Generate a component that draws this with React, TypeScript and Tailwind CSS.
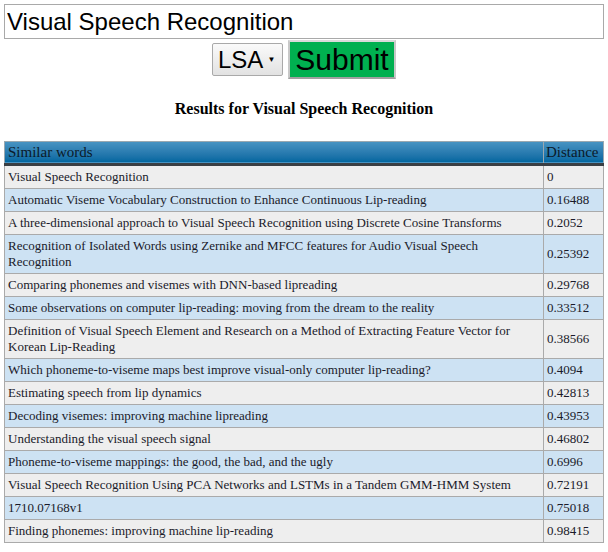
const ROWS: { title: string; distance: string }[] = [
  { title: "Visual Speech Recognition", distance: "0" },
  { title: "Automatic Viseme Vocabulary Construction to Enhance Continuous Lip-reading", distance: "0.16488" },
  { title: "A three-dimensional approach to Visual Speech Recognition using Discrete Cosine Transforms", distance: "0.2052" },
  { title: "Recognition of Isolated Words using Zernike and MFCC features for Audio Visual Speech Recognition", distance: "0.25392" },
  { title: "Comparing phonemes and visemes with DNN-based lipreading", distance: "0.29768" },
  { title: "Some observations on computer lip-reading: moving from the dream to the reality", distance: "0.33512" },
  { title: "Definition of Visual Speech Element and Research on a Method of Extracting Feature Vector for Korean Lip-Reading", distance: "0.38566" },
  { title: "Which phoneme-to-viseme maps best improve visual-only computer lip-reading?", distance: "0.4094" },
  { title: "Estimating speech from lip dynamics", distance: "0.42813" },
  { title: "Decoding visemes: improving machine lipreading", distance: "0.43953" },
  { title: "Understanding the visual speech signal", distance: "0.46802" },
  { title: "Phoneme-to-viseme mappings: the good, the bad, and the ugly", distance: "0.6996" },
  { title: "Visual Speech Recognition Using PCA Networks and LSTMs in a Tandem GMM-HMM System", distance: "0.72191" },
  { title: "1710.07168v1", distance: "0.75018" },
  { title: "Finding phonemes: improving machine lip-reading", distance: "0.98415" },
];

const App = () => {
  return (
    <div className="w-[608px] h-[552px] bg-white overflow-hidden font-['Liberation_Serif',serif]">
      <div className="px-1 pt-1">
        <input
          defaultValue="Visual Speech Recognition"
          className="block w-full h-[35px] border border-[#a9a9a9] px-[2px] text-[24px] leading-[28px] text-black font-['Liberation_Sans',Arial,sans-serif] outline-none"
        />
      </div>

      <div className="flex items-center justify-center gap-[5px] mt-[1px]">
        <div className="flex items-center w-[71px] h-[33px] pl-[5px] border border-[#a9a9a9] rounded-[2px] bg-gradient-to-b from-[#fafafa] to-[#e2e2e2] text-[24px] text-black font-['Liberation_Sans',Arial,sans-serif]">
          <span>LSA</span>
          <span className="ml-[4px] text-[8px] leading-none">▼</span>
        </div>
        <button className="w-[108px] h-[39px] bg-[#00b050] border-2 border-[#c8c8c8] border-t-[#dadada] border-b-[#a0a0a0] text-[30px] leading-none text-black font-['Liberation_Sans',Arial,sans-serif]">
          Submit
        </button>
      </div>

      <h3 className="text-center font-bold text-[16px] leading-[20px] mt-[20px] text-black">
        Results for Visual Speech Recognition
      </h3>

      <div className="px-1 mt-[22px]">
        <table className="w-full border-collapse text-[13px] leading-[16px] text-[#1a1a2a]">
          <thead>
            <tr className="bg-gradient-to-b from-[#4793c2] to-[#0067a0] border-b-[3px] border-b-[#3a3f44]">
              <th className="text-left font-normal text-[15px] leading-[17px] px-[3px] py-[2px] border border-[#9aa8b0] border-b-[#3a3f44] text-[#0b1a2a]">
                Similar words
              </th>
              <th className="text-left font-normal text-[15px] leading-[17px] px-[2px] py-[2px] border border-[#9aa8b0] border-b-[#3a3f44] text-[#0b1a2a] w-[60px]">
                Distance
              </th>
            </tr>
          </thead>
          <tbody>
            {ROWS.map((r, i) => (
              <tr key={r.title} className={i % 2 === 0 ? "bg-[#eeeeee]" : "bg-[#cde2f3]"}>
                <td className="px-[3px] py-[3px] border border-[#aaaaaa]">{r.title}</td>
                <td className="px-[3px] py-[3px] border border-[#aaaaaa]">{r.distance}</td>
              </tr>
            ))}
          </tbody>
        </table>
      </div>
    </div>
  );
};

export default App;
